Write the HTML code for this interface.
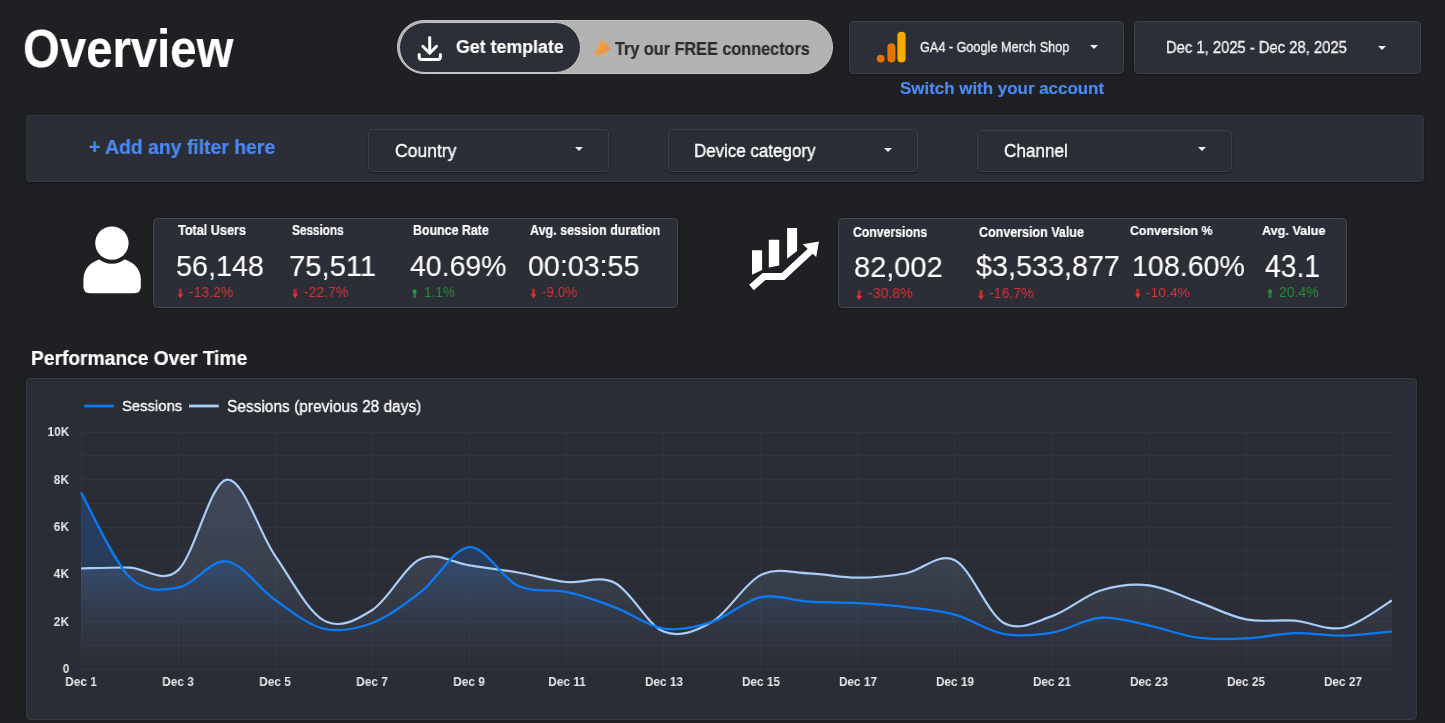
<!DOCTYPE html>
<html><head><meta charset="utf-8">
<style>
html,body{margin:0;padding:0;width:1445px;height:723px;overflow:hidden;background:#1f2024;}
body{position:relative;font-family:"Liberation Sans",sans-serif;}
.abs{position:absolute;left:0;top:0;}
.t{position:absolute;white-space:nowrap;line-height:1;transform-origin:0 0;will-change:transform;}
.ax{color:#e6e6e6;font-weight:700;}
.box{position:absolute;box-sizing:border-box;background:#2b2d36;border:1.5px solid #3e4045;border-radius:4px;box-shadow:0 1px 2px rgba(0,0,0,0.45);}
.card{position:absolute;box-sizing:border-box;background:#2c2e37;border:1.5px solid #48494e;border-radius:4.5px;box-shadow:0 0 2px rgba(0,0,0,0.4);}
.caret{position:absolute;width:0;height:0;border-left:4px solid transparent;border-right:4px solid transparent;border-top:4px solid #eeeeee;}
</style></head><body>

<!-- top pill -->
<div style="position:absolute;left:397px;top:20px;width:436px;height:54px;box-sizing:border-box;border-radius:27px;background:#b2b2b2;border:1px solid #c4c4c4;"></div>
<div style="position:absolute;left:398.5px;top:21.5px;width:182px;height:51px;box-sizing:border-box;border-radius:25.5px;background:#2c2e38;border:1.6px solid #c6c6c6;"></div>

<!-- selectors -->
<div class="box" style="left:849px;top:20.5px;width:275px;height:53.5px;background:#2d2f38;"></div>
<div class="box" style="left:1134px;top:20.5px;width:287px;height:53.5px;background:#2d2f38;"></div>
<div class="caret" style="left:1090px;top:45px;"></div>
<div class="caret" style="left:1378px;top:45.5px;"></div>

<!-- filter bar -->
<div class="box" style="left:26px;top:115px;width:1398px;height:67px;background:#2c2e37;border:1px solid #33353d;border-radius:3px;box-shadow:0 1px 3px rgba(0,0,0,0.4);"></div>
<div class="box" style="left:368px;top:129px;width:241px;height:43px;"></div>
<div class="box" style="left:668px;top:129px;width:250px;height:43px;"></div>
<div class="box" style="left:977px;top:129.5px;width:255px;height:42.5px;"></div>
<div class="caret" style="left:574.5px;top:147px;"></div>
<div class="caret" style="left:883.5px;top:148px;"></div>
<div class="caret" style="left:1197.5px;top:147px;"></div>

<!-- KPI cards -->
<div class="card" style="left:153px;top:218px;width:525px;height:90px;"></div>
<div class="card" style="left:838px;top:218px;width:509px;height:90px;"></div>

<!-- chart frame -->
<div class="box" style="left:26px;top:378px;width:1391px;height:342px;border-color:#393b44;box-shadow:0 0 3px rgba(0,0,0,0.45);"></div>

<!-- icons -->
<svg class="abs" width="1445" height="723" viewBox="0 0 1445 723">
 <!-- download -->
 <g fill="none" stroke="#ffffff" stroke-width="3" stroke-linecap="round" stroke-linejoin="round">
  <path d="M429.7 37.5 V52"/>
  <path d="M422.8 46.3 L429.7 53.2 L436.6 46.3"/>
  <path d="M419.2 54.5 V56.8 Q419.2 59.6 422 59.6 H437.6 Q440.4 59.6 440.4 56.8 V54.5"/>
 </g>
 <!-- megaphone -->
 <defs><linearGradient id="mg" x1="0" y1="0" x2="1" y2="1"><stop offset="0" stop-color="#f6ab3a"/><stop offset="1" stop-color="#ee8650"/></linearGradient></defs>
 <path d="M601 40.3 Q601.8 39.5 602.6 40.2 L610.6 48.3 Q610.9 49 610.2 49.4 L600.2 54.8 L596.3 50.7 Z" fill="url(#mg)"/>
 <path d="M594 51.9 L596.1 50.6 L599.5 55.2 L597.4 56.9 Z" fill="#f09a3a"/>
 <path d="M602.6 54.2 L603.6 56.2 L607.4 55.6 L606.6 52.6" fill="none" stroke="#f5b43c" stroke-width="1.1"/>
 <!-- GA icon -->
 <circle cx="880.7" cy="58.6" r="3.9" fill="#e8710a"/>
 <rect x="887.4" y="43.2" width="8" height="19.4" rx="4" fill="#e37400"/>
 <rect x="897.4" y="31.8" width="8.2" height="30.8" rx="4.1" fill="#f9ab00"/>
 <!-- person -->
 <path d="M83.4,286.5 V280 C83.4,266 95,257.5 112,257.5 C129,257.5 140.8,266 140.8,280 V286.5 Q140.8,293.2 134.3,293.2 H89.9 Q83.4,293.2 83.4,286.5 Z" fill="#ffffff"/>
 <circle cx="111.9" cy="243.1" r="20.6" fill="#1f2024"/>
 <circle cx="111.9" cy="243.1" r="16.7" fill="#ffffff"/>
 <!-- growth -->
 <g fill="#ffffff">
  <path d="M752 250.3 H762.1 V270 L752 274.7 Z"/>
  <path d="M768.8 239.7 H779.2 V265.5 L768.8 267.5 Z"/>
  <path d="M787.1 228 H797.1 V251 L787.1 258.7 Z"/>
  <path d="M819 241.5 L802.7 244.2 L816.2 257 Z"/>
 </g>
 <path d="M751.5 287.5 L764 276.5 H783 L810.5 251" fill="none" stroke="#ffffff" stroke-width="7" stroke-linejoin="miter"/>
 <!-- delta arrows -->
 <g id="dn" fill="#e53935">
 </g>
 <!-- legend lines -->
 <rect x="84.2" y="404.6" width="29.8" height="2.8" fill="#0b7bf5"/>
 <rect x="189" y="404.6" width="29.8" height="2.8" fill="#a9cdf7"/>
</svg>

<svg class="abs" width="1445" height="723" viewBox="0 0 1445 723">
<defs>
<linearGradient id="gb" gradientUnits="userSpaceOnUse" x1="0" y1="432.20000000000005" x2="0" y2="669.2">
<stop offset="0" stop-color="#1a73e8" stop-opacity="0.32"/><stop offset="0.55" stop-color="#1a73e8" stop-opacity="0.2"/><stop offset="0.68" stop-color="#1a73e8" stop-opacity="0.1"/><stop offset="0.78" stop-color="#1a73e8" stop-opacity="0.035"/><stop offset="0.88" stop-color="#1a73e8" stop-opacity="0.005"/><stop offset="1" stop-color="#1a73e8" stop-opacity="0"/></linearGradient>
<linearGradient id="gl" gradientUnits="userSpaceOnUse" x1="0" y1="432.20000000000005" x2="0" y2="669.2">
<stop offset="0" stop-color="#9fc0f0" stop-opacity="0.22"/><stop offset="0.6" stop-color="#9fc0f0" stop-opacity="0.12"/><stop offset="1" stop-color="#9fc0f0" stop-opacity="0"/></linearGradient>
</defs>
<g stroke="#31343d" stroke-width="1" shape-rendering="crispEdges"><line x1="81.0" y1="669.20" x2="1392.85" y2="669.20"/><line x1="81.0" y1="645.50" x2="1392.85" y2="645.50"/><line x1="81.0" y1="621.80" x2="1392.85" y2="621.80"/><line x1="81.0" y1="598.10" x2="1392.85" y2="598.10"/><line x1="81.0" y1="574.40" x2="1392.85" y2="574.40"/><line x1="81.0" y1="550.70" x2="1392.85" y2="550.70"/><line x1="81.0" y1="527.00" x2="1392.85" y2="527.00"/><line x1="81.0" y1="503.30" x2="1392.85" y2="503.30"/><line x1="81.0" y1="479.60" x2="1392.85" y2="479.60"/><line x1="81.0" y1="455.90" x2="1392.85" y2="455.90"/><line x1="81.0" y1="432.20" x2="1392.85" y2="432.20"/><line x1="81.00" y1="432.20" x2="81.00" y2="669.2"/><line x1="178.10" y1="432.20" x2="178.10" y2="669.2"/><line x1="275.20" y1="432.20" x2="275.20" y2="669.2"/><line x1="372.30" y1="432.20" x2="372.30" y2="669.2"/><line x1="469.40" y1="432.20" x2="469.40" y2="669.2"/><line x1="566.50" y1="432.20" x2="566.50" y2="669.2"/><line x1="663.60" y1="432.20" x2="663.60" y2="669.2"/><line x1="760.70" y1="432.20" x2="760.70" y2="669.2"/><line x1="857.80" y1="432.20" x2="857.80" y2="669.2"/><line x1="954.90" y1="432.20" x2="954.90" y2="669.2"/><line x1="1052.00" y1="432.20" x2="1052.00" y2="669.2"/><line x1="1149.10" y1="432.20" x2="1149.10" y2="669.2"/><line x1="1246.20" y1="432.20" x2="1246.20" y2="669.2"/><line x1="1343.30" y1="432.20" x2="1343.30" y2="669.2"/></g>
<path d="M81.00,568.48 C89.09,568.32 113.37,567.25 129.55,567.53 C145.73,567.80 161.92,584.79 178.10,570.13 C194.28,555.48 210.47,481.97 226.65,479.60 C242.83,477.23 259.02,532.45 275.20,555.91 C291.38,579.38 307.57,611.37 323.75,620.38 C339.93,629.38 356.12,620.22 372.30,609.95 C388.48,599.68 404.67,566.18 420.85,558.76 C437.03,551.33 453.22,563.10 469.40,565.39 C485.58,567.68 501.77,569.74 517.95,572.50 C534.13,575.27 550.32,580.25 566.50,581.98 C582.68,583.72 598.87,574.68 615.05,582.93 C631.23,591.19 647.42,625.04 663.60,631.52 C679.78,638.00 695.97,631.20 712.15,621.80 C728.33,612.40 744.52,583.17 760.70,575.11 C776.88,567.05 793.07,573.02 809.25,573.45 C825.43,573.89 841.62,577.76 857.80,577.72 C873.98,577.68 890.17,576.14 906.35,573.22 C922.53,570.29 938.72,551.92 954.90,560.18 C971.08,568.44 987.27,613.43 1003.45,622.75 C1019.63,632.07 1035.82,621.48 1052.00,616.11 C1068.18,610.74 1084.37,595.65 1100.55,590.52 C1116.73,585.38 1132.92,583.41 1149.10,585.30 C1165.28,587.20 1181.47,596.20 1197.65,601.89 C1213.83,607.58 1230.02,616.31 1246.20,619.43 C1262.38,622.55 1278.57,619.23 1294.75,620.62 C1310.93,622.00 1327.12,631.08 1343.30,627.73 C1359.48,624.37 1383.76,605.01 1391.85,600.47 L1391.85,669.2 L81.0,669.2 Z" fill="url(#gl)"/>
<path d="M81.00,492.40 C89.09,506.50 113.37,561.13 129.55,577.01 C145.73,592.89 161.92,590.28 178.10,587.67 C194.28,585.07 210.47,559.31 226.65,561.37 C242.83,563.42 259.02,588.78 275.20,600.00 C291.38,611.21 307.57,624.84 323.75,628.67 C339.93,632.50 356.12,629.11 372.30,622.99 C388.48,616.86 404.67,604.58 420.85,591.94 C437.03,579.30 453.22,548.17 469.40,547.14 C485.58,546.12 501.77,578.31 517.95,585.78 C534.13,593.24 550.32,588.34 566.50,591.94 C582.68,595.53 598.87,601.22 615.05,607.34 C631.23,613.47 647.42,626.26 663.60,628.67 C679.78,631.08 695.97,627.05 712.15,621.80 C728.33,616.55 744.52,600.51 760.70,597.15 C776.88,593.79 793.07,600.67 809.25,601.66 C825.43,602.64 841.62,602.17 857.80,603.08 C873.98,603.99 890.17,605.17 906.35,607.11 C922.53,609.04 938.72,610.23 954.90,614.69 C971.08,619.15 987.27,630.89 1003.45,633.89 C1019.63,636.89 1035.82,635.39 1052.00,632.70 C1068.18,630.02 1084.37,618.96 1100.55,617.77 C1116.73,616.59 1132.92,622.27 1149.10,625.59 C1165.28,628.91 1181.47,635.55 1197.65,637.68 C1213.83,639.81 1230.02,639.14 1246.20,638.39 C1262.38,637.64 1278.57,633.65 1294.75,633.18 C1310.93,632.70 1327.12,635.86 1343.30,635.55 C1359.48,635.23 1383.76,631.99 1391.85,631.28 L1391.85,669.2 L81.0,669.2 Z" fill="url(#gb)"/>
<path d="M81.00,568.48 C89.09,568.32 113.37,567.25 129.55,567.53 C145.73,567.80 161.92,584.79 178.10,570.13 C194.28,555.48 210.47,481.97 226.65,479.60 C242.83,477.23 259.02,532.45 275.20,555.91 C291.38,579.38 307.57,611.37 323.75,620.38 C339.93,629.38 356.12,620.22 372.30,609.95 C388.48,599.68 404.67,566.18 420.85,558.76 C437.03,551.33 453.22,563.10 469.40,565.39 C485.58,567.68 501.77,569.74 517.95,572.50 C534.13,575.27 550.32,580.25 566.50,581.98 C582.68,583.72 598.87,574.68 615.05,582.93 C631.23,591.19 647.42,625.04 663.60,631.52 C679.78,638.00 695.97,631.20 712.15,621.80 C728.33,612.40 744.52,583.17 760.70,575.11 C776.88,567.05 793.07,573.02 809.25,573.45 C825.43,573.89 841.62,577.76 857.80,577.72 C873.98,577.68 890.17,576.14 906.35,573.22 C922.53,570.29 938.72,551.92 954.90,560.18 C971.08,568.44 987.27,613.43 1003.45,622.75 C1019.63,632.07 1035.82,621.48 1052.00,616.11 C1068.18,610.74 1084.37,595.65 1100.55,590.52 C1116.73,585.38 1132.92,583.41 1149.10,585.30 C1165.28,587.20 1181.47,596.20 1197.65,601.89 C1213.83,607.58 1230.02,616.31 1246.20,619.43 C1262.38,622.55 1278.57,619.23 1294.75,620.62 C1310.93,622.00 1327.12,631.08 1343.30,627.73 C1359.48,624.37 1383.76,605.01 1391.85,600.47" fill="none" stroke="#a9cdf7" stroke-width="2.2"/>
<path d="M81.00,492.40 C89.09,506.50 113.37,561.13 129.55,577.01 C145.73,592.89 161.92,590.28 178.10,587.67 C194.28,585.07 210.47,559.31 226.65,561.37 C242.83,563.42 259.02,588.78 275.20,600.00 C291.38,611.21 307.57,624.84 323.75,628.67 C339.93,632.50 356.12,629.11 372.30,622.99 C388.48,616.86 404.67,604.58 420.85,591.94 C437.03,579.30 453.22,548.17 469.40,547.14 C485.58,546.12 501.77,578.31 517.95,585.78 C534.13,593.24 550.32,588.34 566.50,591.94 C582.68,595.53 598.87,601.22 615.05,607.34 C631.23,613.47 647.42,626.26 663.60,628.67 C679.78,631.08 695.97,627.05 712.15,621.80 C728.33,616.55 744.52,600.51 760.70,597.15 C776.88,593.79 793.07,600.67 809.25,601.66 C825.43,602.64 841.62,602.17 857.80,603.08 C873.98,603.99 890.17,605.17 906.35,607.11 C922.53,609.04 938.72,610.23 954.90,614.69 C971.08,619.15 987.27,630.89 1003.45,633.89 C1019.63,636.89 1035.82,635.39 1052.00,632.70 C1068.18,630.02 1084.37,618.96 1100.55,617.77 C1116.73,616.59 1132.92,622.27 1149.10,625.59 C1165.28,628.91 1181.47,635.55 1197.65,637.68 C1213.83,639.81 1230.02,639.14 1246.20,638.39 C1262.38,637.64 1278.57,633.65 1294.75,633.18 C1310.93,632.70 1327.12,635.86 1343.30,635.55 C1359.48,635.23 1383.76,631.99 1391.85,631.28" fill="none" stroke="#0b7bf5" stroke-width="2.3"/>
</svg>
<div class="t ax" style="right:1375.9px;top:425.25px;font-size:13.3px;transform:scaleX(0.9);transform-origin:right">10K</div>
<div class="t ax" style="right:1375.9px;top:472.65px;font-size:13.3px;transform:scaleX(0.9);transform-origin:right">8K</div>
<div class="t ax" style="right:1375.9px;top:520.05px;font-size:13.3px;transform:scaleX(0.9);transform-origin:right">6K</div>
<div class="t ax" style="right:1375.9px;top:567.45px;font-size:13.3px;transform:scaleX(0.9);transform-origin:right">4K</div>
<div class="t ax" style="right:1375.9px;top:614.85px;font-size:13.3px;transform:scaleX(0.9);transform-origin:right">2K</div>
<div class="t ax" style="right:1375.9px;top:661.95px;font-size:13.3px;transform:scaleX(0.9);transform-origin:right">0</div>
<div class="t ax" style="left:41.00px;width:80px;text-align:center;top:674.82px;font-size:13.1px;transform:scaleX(0.905);transform-origin:center">Dec 1</div>
<div class="t ax" style="left:138.10px;width:80px;text-align:center;top:674.82px;font-size:13.1px;transform:scaleX(0.905);transform-origin:center">Dec 3</div>
<div class="t ax" style="left:235.20px;width:80px;text-align:center;top:674.82px;font-size:13.1px;transform:scaleX(0.905);transform-origin:center">Dec 5</div>
<div class="t ax" style="left:332.30px;width:80px;text-align:center;top:674.82px;font-size:13.1px;transform:scaleX(0.905);transform-origin:center">Dec 7</div>
<div class="t ax" style="left:429.40px;width:80px;text-align:center;top:674.82px;font-size:13.1px;transform:scaleX(0.905);transform-origin:center">Dec 9</div>
<div class="t ax" style="left:526.50px;width:80px;text-align:center;top:674.82px;font-size:13.1px;transform:scaleX(0.905);transform-origin:center">Dec 11</div>
<div class="t ax" style="left:623.60px;width:80px;text-align:center;top:674.82px;font-size:13.1px;transform:scaleX(0.905);transform-origin:center">Dec 13</div>
<div class="t ax" style="left:720.70px;width:80px;text-align:center;top:674.82px;font-size:13.1px;transform:scaleX(0.905);transform-origin:center">Dec 15</div>
<div class="t ax" style="left:817.80px;width:80px;text-align:center;top:674.82px;font-size:13.1px;transform:scaleX(0.905);transform-origin:center">Dec 17</div>
<div class="t ax" style="left:914.90px;width:80px;text-align:center;top:674.82px;font-size:13.1px;transform:scaleX(0.905);transform-origin:center">Dec 19</div>
<div class="t ax" style="left:1012.00px;width:80px;text-align:center;top:674.82px;font-size:13.1px;transform:scaleX(0.905);transform-origin:center">Dec 21</div>
<div class="t ax" style="left:1109.10px;width:80px;text-align:center;top:674.82px;font-size:13.1px;transform:scaleX(0.905);transform-origin:center">Dec 23</div>
<div class="t ax" style="left:1206.20px;width:80px;text-align:center;top:674.82px;font-size:13.1px;transform:scaleX(0.905);transform-origin:center">Dec 25</div>
<div class="t ax" style="left:1303.30px;width:80px;text-align:center;top:674.82px;font-size:13.1px;transform:scaleX(0.905);transform-origin:center">Dec 27</div>
<div class="t" style="left:23.14px;top:22.00px;font-weight:700;font-size:53.92px;color:#ffffff;-webkit-text-stroke:0.2px #ffffff;transform:scaleX(0.8777)">Overview</div>
<div class="t" style="left:456.00px;top:38.00px;font-weight:700;font-size:18.75px;color:#ffffff;-webkit-text-stroke:0.2px #ffffff;transform:scaleX(0.9474)">Get template</div>
<div class="t" style="left:614.50px;top:41.00px;font-weight:700;font-size:17.73px;color:#2b2b2b;-webkit-text-stroke:0.2px #2b2b2b;transform:scaleX(0.9160)">Try our FREE connectors</div>
<div class="t" style="left:920.30px;top:41.00px;font-weight:400;font-size:13.95px;color:#f4f4f4;-webkit-text-stroke:0.3px #f4f4f4;transform:scaleX(0.9091)">GA4 - Google Merch Shop</div>
<div class="t" style="left:900.20px;top:81.00px;font-weight:700;font-size:16.72px;color:#4a8af4;-webkit-text-stroke:0.2px #4a8af4;transform:scaleX(1.0134)">Switch with your account</div>
<div class="t" style="left:1166.00px;top:40.00px;font-weight:400;font-size:15.7px;color:#f4f4f4;-webkit-text-stroke:0.3px #f4f4f4;transform:scaleX(0.9422)">Dec 1, 2025 - Dec 28, 2025</div>
<div class="t" style="left:89.30px;top:137.00px;font-weight:700;font-size:20.2px;color:#4a8af4;-webkit-text-stroke:0.2px #4a8af4;transform:scaleX(0.9603)">+ Add any filter here</div>
<div class="t" style="left:394.50px;top:142.00px;font-weight:400;font-size:18.02px;color:#ffffff;-webkit-text-stroke:0.35px #ffffff;transform:scaleX(0.9746)">Country</div>
<div class="t" style="left:694.36px;top:142.00px;font-weight:400;font-size:18.02px;color:#ffffff;-webkit-text-stroke:0.35px #ffffff;transform:scaleX(0.9403)">Device category</div>
<div class="t" style="left:1003.60px;top:142.00px;font-weight:400;font-size:18.02px;color:#ffffff;-webkit-text-stroke:0.35px #ffffff;transform:scaleX(0.9522)">Channel</div>
<div class="t" style="left:178.10px;top:224.00px;font-weight:700;font-size:13.81px;color:#ffffff;-webkit-text-stroke:0.2px #ffffff;transform:scaleX(0.9162)">Total Users</div>
<div class="t" style="left:175.64px;top:251.00px;font-weight:400;font-size:29.8px;color:#ffffff;-webkit-text-stroke:0.12px #ffffff;transform:scaleX(0.9644)">56,148</div>
<div class="t" style="left:189.00px;top:285.00px;font-weight:400;font-size:14.39px;color:#d63232;transform:scaleX(0.9717)">-13.2%</div>
<div class="t" style="left:292.10px;top:224.00px;font-weight:700;font-size:13.81px;color:#ffffff;-webkit-text-stroke:0.2px #ffffff;transform:scaleX(0.8525)">Sessions</div>
<div class="t" style="left:288.82px;top:251.00px;font-weight:400;font-size:29.8px;color:#ffffff;-webkit-text-stroke:0.12px #ffffff;transform:scaleX(0.9793)">75,511</div>
<div class="t" style="left:303.70px;top:285.00px;font-weight:400;font-size:14.39px;color:#d63232;transform:scaleX(0.9717)">-22.7%</div>
<div class="t" style="left:413.00px;top:224.00px;font-weight:700;font-size:13.81px;color:#ffffff;-webkit-text-stroke:0.2px #ffffff;transform:scaleX(0.8976)">Bounce Rate</div>
<div class="t" style="left:410.00px;top:251.00px;font-weight:400;font-size:29.8px;color:#ffffff;-webkit-text-stroke:0.12px #ffffff;transform:scaleX(0.9545)">40.69%</div>
<div class="t" style="left:424.06px;top:285.00px;font-weight:400;font-size:14.39px;color:#2a8c38;transform:scaleX(0.9437)">1.1%</div>
<div class="t" style="left:530.40px;top:224.00px;font-weight:700;font-size:13.81px;color:#ffffff;-webkit-text-stroke:0.2px #ffffff;transform:scaleX(0.9062)">Avg. session duration</div>
<div class="t" style="left:528.40px;top:251.00px;font-weight:400;font-size:29.8px;color:#ffffff;-webkit-text-stroke:0.12px #ffffff;transform:scaleX(0.9603)">00:03:55</div>
<div class="t" style="left:542.00px;top:285.00px;font-weight:400;font-size:14.39px;color:#d63232;transform:scaleX(0.9368)">-9.0%</div>
<div class="t" style="left:852.50px;top:226.00px;font-weight:700;font-size:13.95px;color:#ffffff;-webkit-text-stroke:0.2px #ffffff;transform:scaleX(0.8776)">Conversions</div>
<div class="t" style="left:854.33px;top:252.00px;font-weight:400;font-size:29.94px;color:#ffffff;-webkit-text-stroke:0.12px #ffffff;transform:scaleX(0.9678)">82,002</div>
<div class="t" style="left:868.40px;top:286.00px;font-weight:400;font-size:14.83px;color:#d63232;transform:scaleX(0.9511)">-30.8%</div>
<div class="t" style="left:978.50px;top:225.00px;font-weight:700;font-size:14.1px;color:#ffffff;-webkit-text-stroke:0.2px #ffffff;transform:scaleX(0.8866)">Conversion Value</div>
<div class="t" style="left:976.00px;top:251.00px;font-weight:400;font-size:29.65px;color:#ffffff;-webkit-text-stroke:0.12px #ffffff;transform:scaleX(0.9696)">$3,533,877</div>
<div class="t" style="left:989.20px;top:286.00px;font-weight:400;font-size:14.53px;color:#d63232;transform:scaleX(0.9717)">-16.7%</div>
<div class="t" style="left:1129.60px;top:224.00px;font-weight:700;font-size:13.66px;color:#ffffff;-webkit-text-stroke:0.2px #ffffff;transform:scaleX(0.9054)">Conversion %</div>
<div class="t" style="left:1131.65px;top:251.00px;font-weight:400;font-size:29.36px;color:#ffffff;-webkit-text-stroke:0.12px #ffffff;transform:scaleX(0.9737)">108.60%</div>
<div class="t" style="left:1145.70px;top:286.00px;font-weight:400;font-size:13.66px;color:#d63232;transform:scaleX(1.0159)">-10.4%</div>
<div class="t" style="left:1262.40px;top:225.00px;font-weight:700;font-size:12.94px;color:#ffffff;-webkit-text-stroke:0.2px #ffffff;transform:scaleX(0.9769)">Avg. Value</div>
<div class="t" style="left:1264.60px;top:252.00px;font-weight:400;font-size:30.96px;color:#ffffff;-webkit-text-stroke:0.12px #ffffff;transform:scaleX(0.9133)">43.1</div>
<div class="t" style="left:1279.00px;top:285.00px;font-weight:400;font-size:14.39px;color:#2a8c38;transform:scaleX(0.9732)">20.4%</div>
<div class="t" style="left:30.90px;top:348.00px;font-weight:700;font-size:20.2px;color:#ffffff;-webkit-text-stroke:0.2px #ffffff;transform:scaleX(0.9509)">Performance Over Time</div>
<div class="t" style="left:121.90px;top:398.00px;font-weight:400;font-size:15.55px;color:#ffffff;-webkit-text-stroke:0.3px #ffffff;transform:scaleX(0.9540)">Sessions</div>
<div class="t" style="left:226.80px;top:398.00px;font-weight:400;font-size:16.42px;color:#ffffff;-webkit-text-stroke:0.3px #ffffff;transform:scaleX(0.9432)">Sessions (previous 28 days)</div>
<svg class="abs" width="1445" height="723" viewBox="0 0 1445 723"><rect x="178.90" y="288.80" width="3" height="1.6" fill="#e3312f" opacity="0.8"/><rect x="178.90" y="290.80" width="3" height="1.6" fill="#e3312f" opacity="0.9"/><rect x="178.90" y="292.80" width="3" height="1.6" fill="#e3312f"/><path d="M177.50,294.20 H183.30 L180.40,298.30 Z" fill="#e3312f"/><rect x="293.70" y="288.80" width="3" height="1.6" fill="#e3312f" opacity="0.8"/><rect x="293.70" y="290.80" width="3" height="1.6" fill="#e3312f" opacity="0.9"/><rect x="293.70" y="292.80" width="3" height="1.6" fill="#e3312f"/><path d="M292.30,294.20 H298.10 L295.20,298.30 Z" fill="#e3312f"/><rect x="532.00" y="288.80" width="3" height="1.6" fill="#e3312f" opacity="0.8"/><rect x="532.00" y="290.80" width="3" height="1.6" fill="#e3312f" opacity="0.9"/><rect x="532.00" y="292.80" width="3" height="1.6" fill="#e3312f"/><path d="M530.60,294.20 H536.40 L533.50,298.30 Z" fill="#e3312f"/><rect x="857.60" y="290.60" width="3" height="1.6" fill="#e3312f" opacity="0.8"/><rect x="857.60" y="292.60" width="3" height="1.6" fill="#e3312f" opacity="0.9"/><rect x="857.60" y="294.60" width="3" height="1.6" fill="#e3312f"/><path d="M856.20,296.00 H862.00 L859.10,300.10 Z" fill="#e3312f"/><rect x="979.60" y="290.30" width="3" height="1.6" fill="#e3312f" opacity="0.8"/><rect x="979.60" y="292.30" width="3" height="1.6" fill="#e3312f" opacity="0.9"/><rect x="979.60" y="294.30" width="3" height="1.6" fill="#e3312f"/><path d="M978.20,295.70 H984.00 L981.10,299.80 Z" fill="#e3312f"/><rect x="1136.20" y="288.70" width="3" height="1.6" fill="#e3312f" opacity="0.8"/><rect x="1136.20" y="290.70" width="3" height="1.6" fill="#e3312f" opacity="0.9"/><rect x="1136.20" y="292.70" width="3" height="1.6" fill="#e3312f"/><path d="M1134.80,294.10 H1140.60 L1137.70,298.20 Z" fill="#e3312f"/><path d="M411.80,292.00 H417.40 L414.60,288.70 Z" fill="#2e9a3c"/><rect x="413.00" y="292.00" width="3.2" height="1.6" fill="#2e9a3c"/><rect x="413.00" y="294.10" width="3.2" height="1.6" fill="#2e9a3c" opacity="0.85"/><rect x="413.00" y="296.20" width="3.2" height="1.9" fill="#2e9a3c" opacity="0.7"/><path d="M1267.20,291.80 H1272.80 L1270.00,288.50 Z" fill="#2e9a3c"/><rect x="1268.40" y="291.80" width="3.2" height="1.6" fill="#2e9a3c"/><rect x="1268.40" y="293.90" width="3.2" height="1.6" fill="#2e9a3c" opacity="0.85"/><rect x="1268.40" y="296.00" width="3.2" height="1.9" fill="#2e9a3c" opacity="0.7"/></svg>
</body></html>
